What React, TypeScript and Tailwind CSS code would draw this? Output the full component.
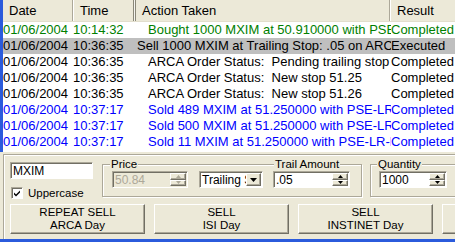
import React from "react";

type Row = { date: string; time: string; action: string; result: string; color: string; pl: string; sel?: boolean };

const rows: Row[] = [
  { date: "01/06/2004", time: "10:14:32", action: "Bought 1000 MXIM at 50.910000 with PSE-LR-ECN", result: "Completed", color: "text-[#008000]", pl: "pl-[15px]" },
  { date: "01/06/2004", time: "10:36:35", action: "Sell 1000 MXIM at Trailing Stop: .05 on ARCA", result: "Executed", color: "text-black", pl: "pl-[4px]", sel: true },
  { date: "01/06/2004", time: "10:36:35", action: "ARCA Order Status:  Pending trailing stop", result: "Completed", color: "text-black", pl: "pl-[15px]" },
  { date: "01/06/2004", time: "10:36:35", action: "ARCA Order Status:  New stop 51.25", result: "Completed", color: "text-black", pl: "pl-[15px]" },
  { date: "01/06/2004", time: "10:36:35", action: "ARCA Order Status:  New stop 51.26", result: "Completed", color: "text-black", pl: "pl-[15px]" },
  { date: "01/06/2004", time: "10:37:17", action: "Sold 489 MXIM at 51.250000 with PSE-LR-ECN", result: "Completed", color: "text-[#0000FF]", pl: "pl-[15px]" },
  { date: "01/06/2004", time: "10:37:17", action: "Sold 500 MXIM at 51.250000 with PSE-LR-ECN", result: "Completed", color: "text-[#0000FF]", pl: "pl-[15px]" },
  { date: "01/06/2004", time: "10:37:17", action: "Sold 11 MXIM at 51.250000 with PSE-LR-ECN", result: "Completed", color: "text-[#0000FF]", pl: "pl-[15px]" },
];

function Tri({ up, disabled }: { up: boolean; disabled?: boolean }) {
  const c = disabled ? "#ACA899" : "#000";
  return (
    <svg width="5" height="3" viewBox="0 0 5 3">
      {up ? <path d="M2.5 0 L5 3 L0 3 Z" fill={c} /> : <path d="M0 0 L5 0 L2.5 3 Z" fill={c} />}
    </svg>
  );
}

function SpinHalf({ up, disabled }: { up: boolean; disabled?: boolean }) {
  return (
    <div className="flex-1 flex items-center justify-center bg-[#ECE9D8] border border-t-white border-l-white border-b-[#716F64] border-r-[#716F64] shadow-[inset_-1px_-1px_0_#ACA899]">
      <Tri up={up} disabled={disabled} />
    </div>
  );
}

function Spin({ disabled }: { disabled?: boolean }) {
  return (
    <div className="w-[16px] h-full flex flex-col">
      <SpinHalf up disabled={disabled} />
      <SpinHalf up={false} disabled={disabled} />
    </div>
  );
}

const editBorder =
  "border border-t-[#ACA899] border-l-[#ACA899] border-b-white border-r-white shadow-[inset_1px_1px_0_#716F64]";

function SpinEdit({ value, w, disabled }: { value: string; w: string; disabled?: boolean }) {
  return (
    <div className={`${w} h-[17px] flex ${editBorder} ${disabled ? "bg-[#ECE9D8] text-[#ACA899]" : "bg-white text-black"}`}>
      <div className="flex-1 pl-[2px] pt-[1px] leading-[14px] text-[12px]">{value}</div>
      <div className="py-[1px] pr-[1px]">
        <Spin disabled={disabled} />
      </div>
    </div>
  );
}

function Group({ w, children, labels }: { w: string; children: React.ReactNode; labels: { text: string; left: string }[] }) {
  return (
    <div className={`relative ${w} h-[33px] border border-[#ACA899] shadow-[inset_1px_1px_0_white,1px_1px_0_white]`}>
      {labels.map((l) => (
        <div key={l.text} className={`absolute top-[-8px] ${l.left} bg-[#ECE9D8] px-[1px] text-[11.5px] leading-[14px] text-black`}>
          {l.text}
        </div>
      ))}
      {children}
    </div>
  );
}

function Btn({ l1, l2 }: { l1: string; l2: string }) {
  return (
    <div className="w-[135px] h-[30px] shrink-0 flex flex-col items-center justify-center bg-[#ECE9D8] border border-t-white border-l-white border-b-[#716F64] border-r-[#716F64] shadow-[inset_-1px_-1px_0_#ACA899] text-[11.5px] leading-[13px] text-black">
      <div>{l1}</div>
      <div>{l2}</div>
    </div>
  );
}

export default function App() {
  return (
    <div className="w-[455px] h-[242px] overflow-hidden bg-[#ECE9D8] flex flex-col border-b-[3px] border-[#2B5BDC] font-['Liberation_Sans',Arial,sans-serif]">
      {/* List */}
      <div className="h-[152px] shrink-0 bg-white border-l-[3px] border-[#2B5BDC] flex flex-col overflow-hidden">
        <div className="h-[22px] shrink-0 flex bg-[#ECE9D8] border-b border-[#E2DECD] text-[13px] text-black leading-[21px]">
          <div className="w-[70px] shrink-0 pl-[6px] border-r border-[#ACA899]">Date</div>
          <div className="w-[60px] shrink-0 pl-[6px] border-l border-white">Time</div>
          <div className="w-[3px] shrink-0 border-x border-[#8A8878] bg-[#F5F4EE]"></div>
          <div className="w-[254px] shrink-0 pl-[6px] border-r border-[#ACA899]">Action Taken</div>
          <div className="flex-1 pl-[6px] border-l border-white whitespace-nowrap">Result</div>
        </div>
        {rows.map((r, i) => (
          <div key={i} className={`h-[16px] shrink-0 flex whitespace-pre text-[13px] leading-[16px] ${r.color} ${r.sel ? "bg-[#BFBFBF]" : ""}`}>
            <div className="w-[70px] shrink-0 overflow-hidden">{r.date}</div>
            <div className="w-[60px] shrink-0 overflow-hidden">{r.time}</div>
            <div className={`w-[258px] shrink-0 overflow-hidden ${r.pl}`}>{r.action}</div>
            <div className="flex-1 overflow-hidden">{r.result}</div>
          </div>
        ))}
      </div>

      {/* Panel */}
      <div className="flex-1 pt-[2px] pl-[3px] flex">
        <div className="flex-1 border-t border-l border-[#ACA899] shadow-[inset_1px_1px_0_white] pl-[6px] pt-[7px] flex flex-col">
          <div className="flex items-start">
            <div className="w-[83px] shrink-0 flex flex-col">
              <div className={`h-[17px] bg-white ${editBorder} pl-[2px] pt-[1px] text-[12px] leading-[14px] text-black`}>MXIM</div>
              <div className="mt-[8px] flex items-center h-[12px]">
                <div className={`w-[12px] h-[12px] bg-white ${editBorder} flex items-center justify-center ml-[1px]`}>
                  <svg width="8" height="8" viewBox="0 0 8 8">
                    <path d="M1 3.5 L3 5.5 L7 1.5 L7 3.5 L3 7.5 L1 5.5 Z" fill="#000" />
                  </svg>
                </div>
                <span className="ml-[5px] text-[11.5px] leading-[12px] text-black">Uppercase</span>
              </div>
            </div>
            <div className="ml-[9px] mt-[2px]">
              <Group w="w-[260px]" labels={[{ text: "Price", left: "left-[7px]" }, { text: "Trail Amount", left: "left-[171px]" }]}>
                <div className="flex pl-[9px] pt-[6px]">
                  <SpinEdit value="50.84" w="w-[76px]" disabled />
                  <div className={`ml-[11px] w-[64px] h-[17px] bg-white ${editBorder} flex`}>
                    <div className="flex-1 overflow-hidden whitespace-nowrap pl-[2px] pt-[1px] text-[12px] leading-[14px] text-black">Trailing Stop</div>
                    <div className="py-[1px] pr-[1px]">
                      <div className="w-[15px] h-full flex items-center justify-center bg-[#ECE9D8] border border-t-white border-l-white border-b-[#716F64] border-r-[#716F64] shadow-[inset_-1px_-1px_0_#ACA899]">
                        <svg width="7" height="4" viewBox="0 0 7 4">
                          <path d="M0 0 L7 0 L3.5 4 Z" fill="#000" />
                        </svg>
                      </div>
                    </div>
                  </div>
                  <div className="ml-[10px]">
                    <SpinEdit value=".05" w="w-[77px]" />
                  </div>
                </div>
              </Group>
            </div>
            <div className="ml-[8px] mt-[2px]">
              <Group w="w-[100px]" labels={[{ text: "Quantity", left: "left-[6px]" }]}>
                <div className="pl-[8px] pt-[6px]">
                  <SpinEdit value="1000" w="w-[68px]" />
                </div>
              </Group>
            </div>
          </div>
          <div className="mt-[5px] flex gap-[9px]">
            <Btn l1="REPEAT SELL" l2="ARCA Day" />
            <Btn l1="SELL" l2="ISI Day" />
            <Btn l1="SELL" l2="INSTINET Day" />
            <Btn l1="SELL" l2="ARCA Day" />
          </div>
        </div>
      </div>
    </div>
  );
}
